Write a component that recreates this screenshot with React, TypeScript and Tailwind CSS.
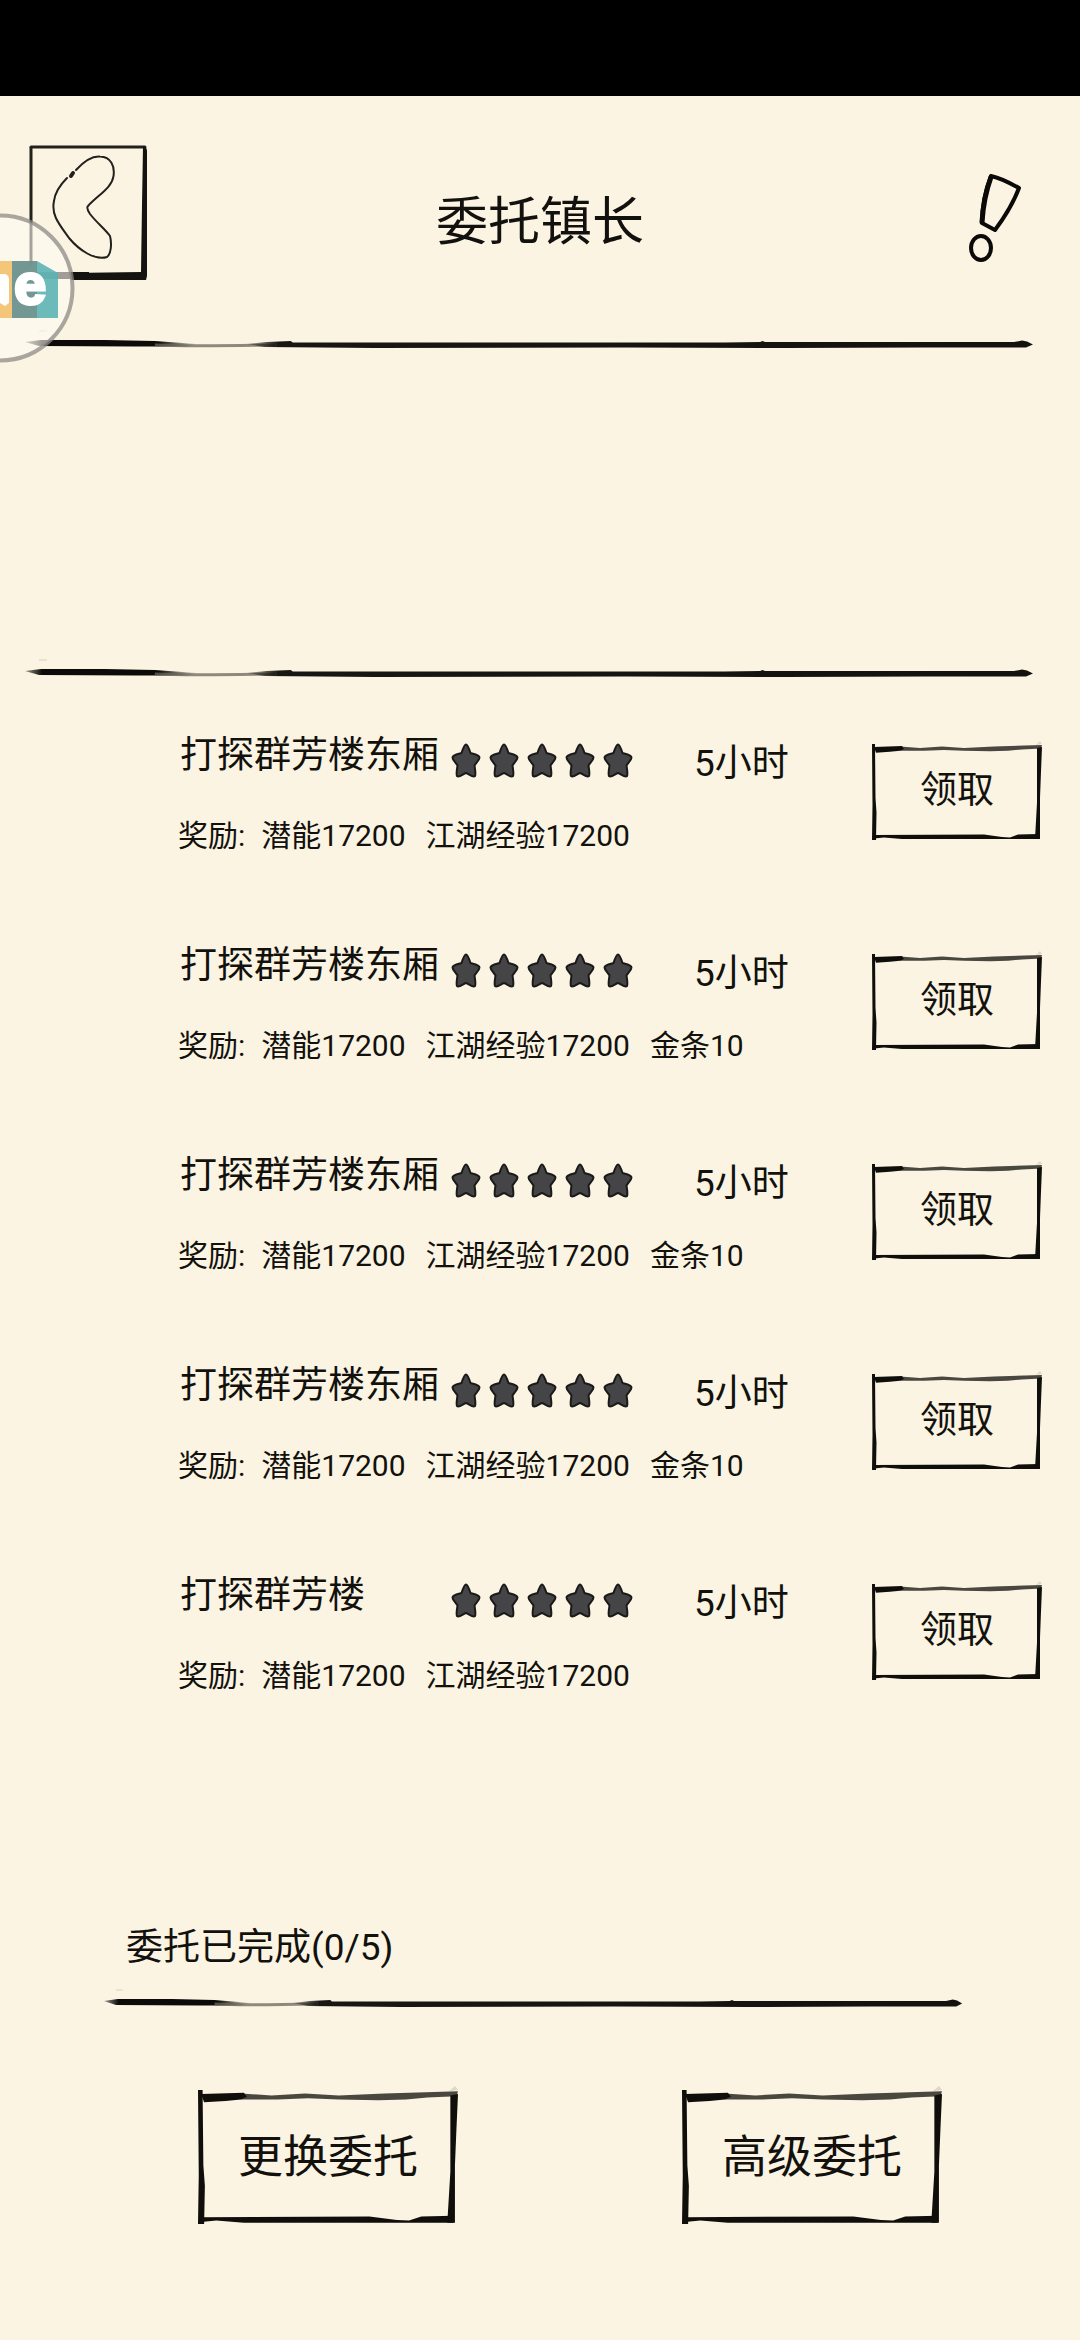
import { useId } from 'react';

type Quest = { name: string; rewards: string[] };

const quests: Quest[] = [
  { name: '打探群芳楼东厢', rewards: ['潜能17200', '江湖经验17200'] },
  { name: '打探群芳楼东厢', rewards: ['潜能17200', '江湖经验17200', '金条10'] },
  { name: '打探群芳楼东厢', rewards: ['潜能17200', '江湖经验17200', '金条10'] },
  { name: '打探群芳楼东厢', rewards: ['潜能17200', '江湖经验17200', '金条10'] },
  { name: '打探群芳楼', rewards: ['潜能17200', '江湖经验17200'] },
];

// Brush stroke used as a divider
const BrushLine = () => {
  const id = useId();
  return (
    <svg viewBox="0 0 1010 30" preserveAspectRatio="none" className="block w-full h-[30px]" aria-hidden="true">
      <defs>
        <linearGradient id={`${id}a`} x1="0" x2="1" y1="0" y2="0">
          <stop offset="0" stopColor="#0c0b09" stopOpacity="0.4" />
          <stop offset="0.1" stopColor="#0c0b09" />
          <stop offset="0.78" stopColor="#0c0b09" />
          <stop offset="1" stopColor="#0c0b09" stopOpacity="0.1" />
        </linearGradient>
        <linearGradient id={`${id}b`} x1="0" x2="1" y1="0" y2="0">
          <stop offset="0" stopColor="#0c0b09" stopOpacity="0.2" />
          <stop offset="0.04" stopColor="#0c0b09" stopOpacity="0.95" />
          <stop offset="1" stopColor="#14120f" />
        </linearGradient>
      </defs>
      <path d="M14 4h8" stroke="#d8d0be" strokeWidth="1" />
      <path d="M0 15 L16 13 L80 13 L130 14 L172 17 L162 19.5 L110 19.5 L14 19 Z" fill={`url(#${id}a)`} />
      <path d="M130 18 C160 19.5 190 19 250 18" stroke="#6b665b" strokeOpacity="0.75" strokeWidth="3" fill="none" />
      <path
        d="M222 17 L242 15 L266 14 L268 15.5 L420 15.5 L600 15.5 L700 15.5 L736 15 L738 14 L741 15 L990 15 L998 13.5 L1003 14.5 L1009 17.5 L1002 20.5 L900 20.5 L760 21 L600 20.5 L350 21 L240 20 Z"
        fill={`url(#${id}b)`}
      />
    </svg>
  );
};

// Hand drawn frame that stretches with its button
const SketchFrame = () => (
  <svg
    viewBox="0 0 170 98"
    preserveAspectRatio="none"
    className="absolute inset-0 size-full overflow-visible"
    fill="#0f0e0b"
    aria-hidden="true"
  >
    <path d="M0 0 L3 0 L3.5 55 L4.5 70 L4 98 L0 98 L0.5 62 Z" />
    <path d="M2 3 L30 2 L32 5 L28 7 L18 8 L4 9 Z" />
    <path d="M28 2.5 L48 4 L70 2.5 L92 4 L122 2.5 L170 1 L169 4.5 L150 5.5 L136 7 L118 7.5 L92 7 L72 6 L52 7 L28 7 Z" fillOpacity="0.75" />
    <path d="M165 4 L170 3 L169 28 L168 55 L168 97 L163 97 L165 60 L165 40 Z" />
    <path d="M2 93 L112 92.500 L130 95 L138 95.500 L146 92.500 L167 92 L167 97 L30 97 L12 95.500 L2 96.500 Z" />
    <path d="M164 1 L168 -3 L170 0 Z" fillOpacity="0.12" />
  </svg>
);

const Star = () => (
  <svg viewBox="0 0 30 35" className="w-[30px] h-[35px]" aria-hidden="true">
    <path
      d="M15 1.500 C16.500 1.500 17.500 4 19.500 10 C23 11 28.500 12 28.500 14.500 C28.500 17 25 19.500 23.500 22.500 C24 26 25 31 24 33 C22 35 18 31 15 30 C12 31 8 35 6 33 C5 31 6 26 6.500 22.500 C5 19.500 1.500 17 1.500 14.500 C1.500 12 7 11 10.500 10 C12.500 4 13.500 1.500 15 1.500 Z"
      fill="#454547"
      stroke="#1b1a19"
      strokeWidth="2"
      strokeLinejoin="round"
    />
  </svg>
);

const QuestRow = ({ quest }: { quest: Quest }) => (
  <li className="flex items-start justify-between">
    <div className="grow">
      <div className="flex items-start pl-[2px]">
        <h2 className="w-[271px] text-[37px] leading-[44px]">{quest.name}</h2>
        <div className="flex h-[52px] w-[243px] items-center gap-2" role="img" aria-label="5">
          {[1, 2, 3, 4, 5].map((n) => (
            <Star key={n} />
          ))}
        </div>
        <span className="text-[37px] leading-[60px]">5小时</span>
      </div>
      <div className="mt-5 flex text-[30px] leading-[44px]">
        <span className="mr-4">奖励:</span>
        <div className="flex gap-5">
          {quest.rewards.map((r) => (
            <span key={r}>{r}</span>
          ))}
        </div>
      </div>
    </div>
    <button type="button" className="relative mt-2.5 h-24 w-[170px] shrink-0 pb-1 text-[37px] leading-none">
      <SketchFrame />
      领取
    </button>
  </li>
);

const FooterButton = ({ label }: { label: string }) => (
  <button type="button" className="relative h-[134px] w-[260px] text-[45px] leading-none">
    <SketchFrame />
    {label}
  </button>
);

const FloatingBadge = () => (
  <svg viewBox="0 0 76 152" className="absolute left-0 top-[212px] h-[152px] w-[76px]" aria-hidden="true">
    <circle cx="0" cy="76" r="72.500" fill="#fdfaf3" fillOpacity="0.6" stroke="#8d8a86" strokeOpacity="0.75" strokeWidth="4" />
    <path d="M0 49h12v57H0z" fill="#f2c06e" fillOpacity="0.9" />
    <path d="M12 49h25v57H12z" fill="#6c918d" fillOpacity="0.95" />
    <path d="M37 49 L58 61 V106 H37 Z" fill="#5cb3b4" fillOpacity="0.9" />
    <path d="M0 62 H5 Q9 63 9 68 V91 L5 94 L0 91 Z" fill="#fff" />
    <text x="14" y="92" fill="#fff" stroke="#fff" strokeWidth="3" className="font-['Liberation_Sans',sans-serif] text-[58px] font-bold">
      e
    </text>
  </svg>
);

const App = () => {
  return (
    <div className="relative flex min-h-screen flex-col bg-[#fbf4e2] font-[Roboto,'Noto_Sans_CJK_SC',sans-serif] text-[#12110e]">
      <div className="h-24 bg-black" />

      {/* Title bar */}
      <header className="flex h-[231px] items-start justify-between px-[29px] pt-[49px]">
        <button type="button" aria-label="返回">
          <svg viewBox="0 0 119 136" className="h-[136px] w-[119px]" fill="none" stroke="#23211d">
            <path d="M2 2 V120" strokeWidth="3" />
            <path d="M2 2 H116" strokeWidth="3" strokeLinecap="round" />
            <path d="M114 1 Q118 2 118 6 V131 L117 135 H42 V128 L112 127 L113 60 Z" fill="#14130f" stroke="none" />
            <path d="M2 127 H60 V134 H10 Z" fill="#14130f" stroke="none" />
            <path
              d="M47 25 C56 15 64 11 71 11.500 C82 12 86 21 84.500 31 C83 43 69 50 59 61 C57 63 59 66 61 69 C68 78 76 84 81 91 C83 99 82 109 78 112 C66 116 50 105 40 93 C30 79 22 70 25 56 C26 47 32 39 38 33"
              strokeWidth="2"
              strokeLinecap="round"
            />
            <path d="M42 31 L44 28" strokeWidth="4" strokeLinecap="round" />
          </svg>
        </button>
        <h1 className="mt-[50px] text-[52px] leading-[56px]">委托镇长</h1>
        <button type="button" aria-label="说明" className="mr-[26px] mt-6 flex w-[93px] justify-end">
          <svg viewBox="0 0 58 96" className="h-24 w-[58px]" fill="none" stroke="#0b0a08" strokeLinejoin="round" strokeLinecap="round">
            <path d="M24 7 C34 9 43 14 52 19 C46 35 37 49 28 61 L15 54 C15 37 18 22 24 7 Z" strokeWidth="4" />
            <path d="M24 8 C19 22 16 37 15 53" strokeWidth="5" />
            <ellipse cx="14" cy="79" rx="10" ry="12" strokeWidth="4" />
          </svg>
        </button>
      </header>

      <div className="pl-[25px] pr-[46px]">
        <BrushLine />
      </div>
      <div className="h-[299px]" />
      <div className="pl-[25px] pr-[46px]">
        <BrushLine />
      </div>

      {/* Quest list */}
      <ul className="flex flex-col gap-[86px] pl-[178px] pr-[38px] pt-12">
        {quests.map((q, i) => (
          <QuestRow key={i} quest={q} />
        ))}
      </ul>

      {/* Progress and actions */}
      <footer className="mt-[228px]">
        <p className="pl-[126px] text-[37px] leading-[44px]">委托已完成(0/5)</p>
        <div className="mt-4 pl-[104px] pr-[117px]">
          <BrushLine />
        </div>
        <div className="flex justify-between pb-[115px] pl-[198px] pr-[138px] pt-[74px]">
          <FooterButton label="更换委托" />
          <FooterButton label="高级委托" />
        </div>
      </footer>

      <FloatingBadge />
    </div>
  );
};

export default App;
